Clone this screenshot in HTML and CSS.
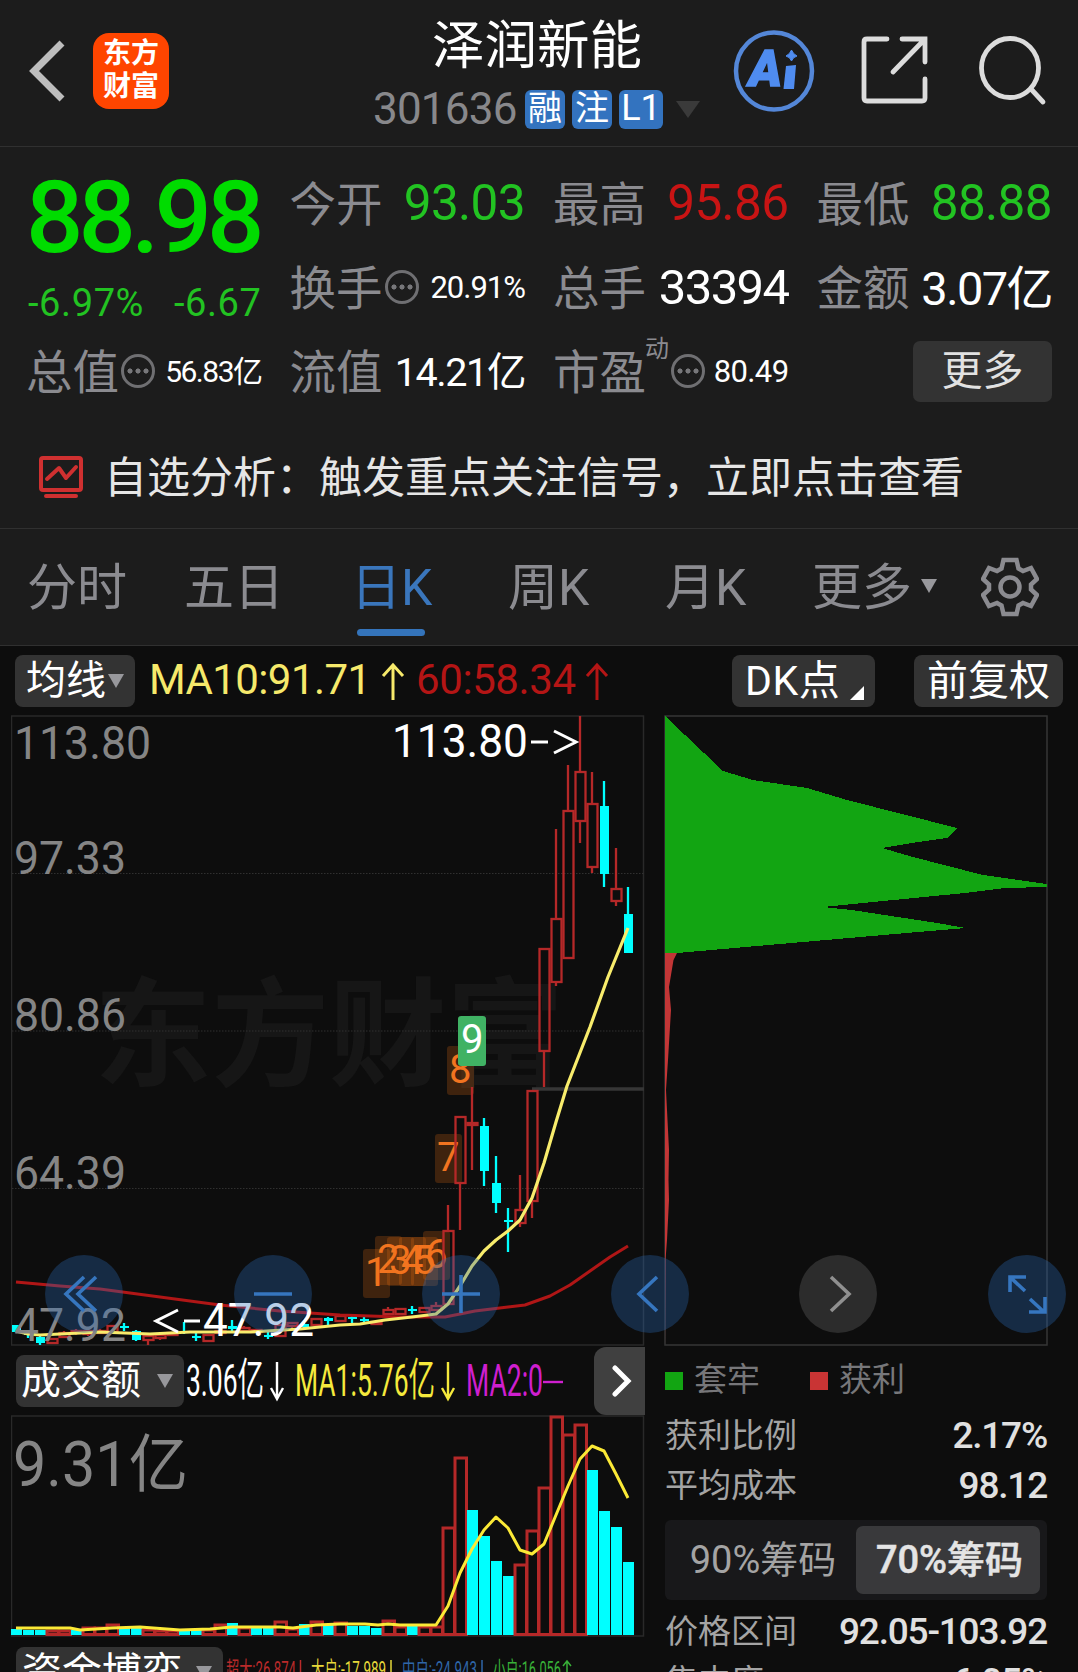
FILE: index.html
```
<!DOCTYPE html>
<html lang="zh-CN">
<head>
  <meta charset="UTF-8">
  <meta name="viewport" content="width=device-width, initial-scale=1.0">
  <title>泽润新能 301636</title>
  <link rel="stylesheet" href="styles.css">
</head>
<body>
  <header class="header">
    <div class="header-left">
      <svg class="back" width="40" height="68" viewBox="0 0 40 68"><path d="M35 6 L7 34 L35 62" /></svg>
      <div class="logo"><span>东方</span><span>财富</span></div>
    </div>
    <div class="header-title">
      <h1>泽润新能</h1>
      <div class="code-row">
        <span class="code">301636</span>
        <span class="badge">融</span>
        <span class="badge">注</span>
        <span class="badge badge-l1">L1</span>
        <i class="tri tri-dark"></i>
      </div>
    </div>
    <div class="header-icons">
      <svg width="82" height="84" viewBox="0 0 82 84">
        <ellipse cx="41" cy="42" rx="38" ry="38.5" fill="none" stroke="#5487d8" stroke-width="4.5" />
        <text x="16" y="57" class="ai-text" textLength="33" lengthAdjust="spacingAndGlyphs">A</text>
        <path d="M53 37 L63 36 L61 60 L50.500 60 Z" fill="#4f8cf0" />
        <path d="M58.500 21 Q60 25 64 27 Q60 28 58.500 32 Q57 28 53 27 Q57 25 58.500 21 Z" fill="#4f8cf0" stroke="#4f8cf0" />
      </svg>
      <svg class="ico-share" width="68" height="70" viewBox="0 0 68 70">
        <path d="M26 4 H6 Q3 4 3 7 V63 Q3 66 6 66 H61 Q64 66 64 63 V44 M41 4 H64 V27 M64 4 L32 37" />
      </svg>
      <svg class="ico-search" width="70" height="72" viewBox="0 0 70 72">
        <ellipse cx="32" cy="33" rx="28.5" ry="29.5" /><path d="M53 54 L65 67" />
      </svg>
    </div>
  </header>

  <section class="quote">
    <div class="price-box">
      <div class="price">88.98</div>
      <div class="change"><span>-6.97%</span><span>-6.67</span></div>
    </div>
    <div class="cell"><label>今开</label><b class="green">93.03</b></div>
    <div class="cell"><label>最高</label><b class="red">95.86</b></div>
    <div class="cell"><label>最低</label><b class="green">88.88</b></div>
    <div class="cell"><label>换手</label><i class="dots"></i><b class="sm pct">20.91%</b></div>
    <div class="cell"><label>总手</label><b class="vol">33394</b></div>
    <div class="cell"><label>金额</label><b class="amount">3.07亿</b></div>
    <div class="cell"><label>总值</label><i class="dots"></i><b class="xs">56.83亿</b></div>
    <div class="cell"><label>流值</label><b class="md">14.21亿</b></div>
    <div class="cell cell-pe"><label>市盈<sup>动</sup></label><i class="dots"></i><b class="sm">80.49</b></div>
    <div class="cell"><button class="btn-more">更多</button></div>
  </section>

  <section class="notice">
    <svg width="46" height="42" viewBox="0 0 46 42">
      <path d="M5 2 H41 Q43 2 43 4 V32 Q43 34 41 34 H5 Q3 34 3 32 V4 Q3 2 5 2 Z M8 40 H38 M9 23 L21 12 L28 22 L38 11" />
    </svg>
    <span>自选分析：触发重点关注信号，立即点击查看</span>
  </section>

  <nav class="tabs">
    <a class="tab-min">分时</a>
    <a class="tab-5d">五日</a>
    <a class="tab-k active">日K</a>
    <a class="tab-k">周K</a>
    <a class="tab-m">月K</a>
    <a>更多<i class="tri tri-tab"></i></a>
    <svg width="58" height="60" viewBox="0 0 58 60">
      <path d="M22.5 3 H35.5 L37.5 11.5 L42 14 L50 11 L56 22 L50 27.5 V32.5 L56 38 L50 49 L42 46 L37.5 48.5 L35.5 57 H22.5 L20.5 48.5 L16 46 L8 49 L2 38 L8 32.5 V27.5 L2 22 L8 11 L16 14 L20.5 11.5 Z" />
      <circle cx="29" cy="30" r="9.5" />
    </svg>
  </nav>

  <div class="toolbar">
    <button class="chip chip-ma">均线<i class="tri tri-chip"></i></button>
    <svg class="ma-text" width="470" height="60" viewBox="145 650 470 60">
      <text x="149" y="694" fill="#f6e96b" textLength="222">MA10:91.71</text>
      <path d="M393 700 V665 M383 676 L393 665 L403 676" stroke="#f6e96b" />
      <text x="416" y="694" fill="#b41515" textLength="160">60:58.34</text>
      <path d="M597 700 V665 M587 676 L597 665 L607 676" stroke="#b41515" />
    </svg>
    <button class="chip chip-dk">DK点<i class="corner"></i></button>
    <button class="chip chip-fq">前复权</button>
  </div>

  <main class="charts">
    <div class="col-left">
      <svg id="kline" width="634" height="631" viewBox="11 715 634 631"></svg>

      <div class="sub-bar">
        <button class="chip chip-vol">成交额<i class="tri tri-chip"></i></button>
        <svg class="vol-text" width="400" height="66" viewBox="185 1348 400 66">
          <text x="186" y="1396" fill="#fff" textLength="78" lengthAdjust="spacingAndGlyphs">3.06亿</text>
          <text x="295" y="1396" fill="#f5e93c" textLength="140" lengthAdjust="spacingAndGlyphs">MA1:5.76亿</text>
          <text x="466" y="1396" fill="#cf1fcf" textLength="77" lengthAdjust="spacingAndGlyphs">MA2:0</text>
          <path d="M277 1362 V1399 M271 1388 L277 1399 L283 1388" stroke="#fff" />
          <path d="M448 1362 V1399 M442 1388 L448 1399 L454 1388" stroke="#f5e93c" />
          <path d="M543 1382 H563" stroke="#cf1fcf" />
        </svg>
        <button class="next">
          <svg width="20" height="34" viewBox="0 0 20 34"><path d="M3 4 L16 17 L3 30" /></svg>
        </button>
      </div>

      <svg id="volume" width="634" height="222" viewBox="11 1415 634 222"></svg>

      <div class="fund-bar">
        <button class="chip chip-fund">资金博弈<i class="tri tri-chip"></i></button>
        <svg class="fund-text" width="350" height="32" viewBox="225 1648 350 32">
          <text x="226" y="1677" fill="#b92a2a" textLength="70" lengthAdjust="spacingAndGlyphs">超大:26.874</text>
          <text x="311" y="1677" fill="#e6d83a" textLength="75" lengthAdjust="spacingAndGlyphs">大户:-17.989</text>
          <text x="402" y="1677" fill="#2f66a8" textLength="75" lengthAdjust="spacingAndGlyphs">中户:-24.943</text>
          <text x="493" y="1677" fill="#38b038" textLength="68" lengthAdjust="spacingAndGlyphs">小户:16.056</text>
          <path d="M300.5 1660 V1678" stroke="#b92a2a" />
          <path d="M391 1660 V1678" stroke="#e6d83a" />
          <path d="M482 1660 V1678" stroke="#2f66a8" />
          <path d="M567 1678 V1661 M563 1666 L567 1661 L571 1666" stroke="#38b038" />
        </svg>
      </div>
    </div>

    <div class="col-right">
      <svg id="chips" width="384" height="631" viewBox="664 715 384 631"></svg>
      <div class="legend">
        <span><i class="sq sq-green"></i>套牢</span>
        <span><i class="sq sq-red"></i>获利</span>
      </div>
      <div class="stat"><span>获利比例</span><b>2.17%</b></div>
      <div class="stat"><span>平均成本</span><b>98.12</b></div>
      <div class="switch">
        <span>90%筹码</span>
        <span class="on">70%筹码</span>
      </div>
      <div class="stat"><span>价格区间</span><b>92.05-103.92</b></div>
      <div class="stat"><span>集中度</span><b>6.05%</b></div>
    </div>

    <div class="float-btns">
      <button><svg viewBox="0 0 78 78"><path d="M39 22 L21 39 L39 56 M51 22 L33 39 L51 56" /></svg></button>
      <button><svg viewBox="0 0 78 78"><path d="M20 39 H58" /></svg></button>
      <button><svg viewBox="0 0 78 78"><path d="M20 39 H58 M39 20 V58" /></svg></button>
      <button><svg viewBox="0 0 78 78"><path d="M46 22 L28 39 L46 56" /></svg></button>
      <button class="off"><svg viewBox="0 0 78 78"><path d="M32 22 L50 39 L32 56" /></svg></button>
      <button><svg viewBox="0 0 78 78"><path d="M37 36 L22 22 M38 22 H22 V37 M42 44 L56 57 M41 57 H57 V42" /></svg></button>
    </div>
  </main>

  <script src="script.js"></script>
</body>
</html>
```
FILE: styles.css
```
* {
  box-sizing: border-box;
  margin: 0;
  padding: 0;
}

body {
  width: 1078px;
  height: 1672px;
  overflow: hidden;
  background: #0d0d0d;
  color: #fff;
  font-family: Roboto, "Noto Sans CJK SC", sans-serif;
  font-weight: 400;
}

button {
  border: none;
  color: inherit;
  font-family: inherit;
}

svg {
  display: block;
  flex: none;
}

i {
  display: inline-block;
  flex: none;
}

/* small triangles */
.tri {
  border-left: 8px solid transparent;
  border-right: 8px solid transparent;
  border-top: 14px solid #98989c;
}

.tri-dark {
  border-left-width: 12px;
  border-right-width: 12px;
  border-top: 17px solid #3a3a3a;
  margin-left: 6px;
}

/* header */
.header {
  height: 147px;
  display: flex;
  background: #1c1c1c;
  border-bottom: 1px solid #303030;
}

.header-left {
  width: 340px;
  padding: 33px 0 0 27px;
  display: flex;
  gap: 26px;
}

.back {
  margin-top: 4px;
}

.back path {
  fill: none;
  stroke: #bdbdbd;
  stroke-width: 7;
}

.logo {
  width: 76px;
  height: 76px;
  padding-top: 4px;
  border-radius: 16px;
  background: #ff4500;
  display: flex;
  flex-direction: column;
  align-items: center;
}

.logo span {
  font-size: 28px;
  line-height: 33px;
  font-weight: 700;
}

.header-title {
  width: 393px;
  padding-top: 15px;
}

.header-title h1 {
  padding-left: 92px;
  font-size: 52.5px;
  font-weight: 400;
  line-height: 62px;
}

.code-row {
  margin-top: 9px;
  padding-left: 33px;
  height: 46px;
  display: flex;
  align-items: center;
  gap: 7px;
}

.code {
  width: 145px;
  font-size: 44px;
  letter-spacing: -0.8px;
  color: #88888b;
}

.badge {
  flex: none;
  width: 40px;
  height: 39px;
  border-radius: 6px;
  background: #3373bf;
  font-size: 34px;
  line-height: 37px;
  text-align: center;
}

.badge-l1 {
  width: 44px;
  font-size: 36px;
}

.header-icons {
  width: 345px;
  padding-top: 29px;
  display: flex;
}

.ai-text {
  font-size: 49px;
  font-weight: 900;
  font-style: italic;
  fill: #4f8cf0;
  stroke: #4f8cf0;
  stroke-width: 1.5;
}

.ico-share {
  margin: 6px 0 0 46px;
}

.ico-search {
  margin: 6px 0 0 49px;
}

.ico-share path,
.ico-search path,
.ico-search ellipse {
  fill: none;
  stroke: #dcdcdc;
  stroke-width: 4.8;
  stroke-linecap: round;
}

/* quote */
.quote {
  padding: 14px 26px 0;
  background: #1c1c1c;
  display: grid;
  grid-template-columns: repeat(4, 1fr);
  grid-auto-rows: 84px;
  column-gap: 28px;
}

.price-box {
  grid-row: span 2;
}

.price {
  padding-top: 5px;
  font-size: 101px;
  font-weight: 500;
  line-height: 104px;
  letter-spacing: -4.8px;
  color: #00dc00;
}

.change {
  margin-top: 10px;
  padding: 0 0 0 2px;
  display: flex;
  justify-content: space-between;
  font-size: 38px;
  line-height: 46px;
  letter-spacing: 0.6px;
  color: #22c322;
}

.cell {
  display: flex;
  align-items: center;
  white-space: nowrap;
}

.cell label {
  position: relative;
  padding-bottom: 6px;
  font-size: 46.500px;
  color: #8b8b90;
}

.cell b {
  margin-left: auto;
  font-size: 49.500px;
  font-weight: 400;
  letter-spacing: -0.6px;
}

.cell .green {
  color: #22c322;
}

.cell .red {
  color: #c81414;
}

.cell .sm {
  font-size: 31px;
}

.cell .pct {
  letter-spacing: -1px;
}

.cell .xs {
  padding-bottom: 4px;
  font-size: 30px;
  letter-spacing: -1.5px;
}

.cell .md {
  padding-bottom: 5px;
  font-size: 39.500px;
  letter-spacing: -1.4px;
}

.cell .vol {
  font-size: 49px;
  letter-spacing: -1.6px;
}

.cell .amount {
  padding-bottom: 6px;
  font-size: 47px;
  letter-spacing: -1.6px;
}

.cell sup {
  position: absolute;
  left: 92px;
  top: -6px;
  font-size: 24px;
}

.dots {
  width: 34px;
  height: 34px;
  margin-left: 2px;
  border: 3px solid #6f6f72;
  border-radius: 50%;
  background:
    radial-gradient(circle at 6px 14px, #77777a 2.3px, transparent 2.8px),
    radial-gradient(circle at 14px 14px, #77777a 2.3px, transparent 2.8px),
    radial-gradient(circle at 22px 14px, #77777a 2.3px, transparent 2.8px);
}

.cell-pe .dots {
  margin-left: 25px;
}

.btn-more {
  width: 139px;
  height: 61px;
  margin-left: auto;
  border-radius: 7px;
  background: #333;
  color: #e2e2e2;
  font-size: 41px;
  line-height: 58px;
}

/* notice */
.notice {
  height: 116px;
  padding: 12px 0 0 38px;
  display: flex;
  align-items: center;
  gap: 20px;
  background: #1c1c1c;
  border-bottom: 1px solid #303030;
  color: #e6e6e6;
  font-size: 43px;
}

.notice span {
  padding-bottom: 6px;
}

.notice svg path {
  fill: none;
  stroke: #cf3030;
  stroke-width: 4;
  stroke-linecap: round;
  stroke-linejoin: round;
}

/* tabs */
.tabs {
  height: 117px;
  padding: 2px 39px 0 27px;
  display: flex;
  align-items: center;
  background: #1c1c1c;
  border-bottom: 1px solid #303030;
}

.tabs a {
  position: relative;
  font-size: 50px;
  line-height: 70px;
  color: #8b8b90;
}

.tabs .tab-min {
  width: 157px;
}

.tabs .tab-5d {
  width: 167px;
}

.tabs .tab-k {
  width: 157px;
}

.tabs .tab-m {
  width: 147px;
}

.tabs .active {
  color: #3a76bc;
}

.tabs .active::after {
  content: "";
  position: absolute;
  left: 6px;
  bottom: -13px;
  width: 68px;
  height: 7px;
  border-radius: 4px;
  background: #3474bb;
}

.tri-tab {
  margin-left: 9px;
  vertical-align: 12px;
}

.tabs svg {
  margin: -3px 0 0 auto;
}

.tabs svg path,
.tabs svg circle {
  fill: none;
  stroke: #8b8b90;
  stroke-width: 4.5;
}

/* chart toolbar */
.toolbar {
  height: 69px;
  padding: 9px 15px 0;
  display: flex;
}

.chip {
  height: 52px;
  border-radius: 8px;
  background: #333;
  display: flex;
  align-items: center;
  font-size: 40px;
  line-height: 50px;
  white-space: nowrap;
}

.chip-ma {
  width: 120px;
  padding-left: 11px;
  gap: 2px;
}

.ma-text {
  margin: -5px 0 0 10px;
}

.ma-text text {
  font-size: 42px;
}

.ma-text path {
  fill: none;
  stroke-width: 3;
}

.vol-text path {
  fill: none;
  stroke-width: 2.4;
}

.chip-dk {
  width: 143px;
  margin-left: 117px;
  padding-left: 13px;
  font-size: 41px;
  letter-spacing: 0.5px;
  gap: 10px;
}

.corner {
  margin-top: 24px;
  border-left: 14px solid transparent;
  border-bottom: 14px solid #fff;
}

.chip-fq {
  width: 149px;
  margin-left: 39px;
  justify-content: center;
  font-size: 41px;
}

/* charts */
.charts {
  position: relative;
  display: flex;
  gap: 19px;
  padding-left: 11px;
}

.col-left {
  width: 634px;
}

.col-right {
  width: 384px;
}

.grid-label {
  font-size: 46px;
  fill: #858585;
}

.mark-label {
  font-size: 46px;
  fill: #fff;
}

.watermark {
  font-size: 118px;
  font-weight: 700;
  fill: #161616;
}

.tag-num {
  font-size: 40px;
}

.sub-bar {
  height: 69px;
  padding: 0 0 0 5px;
  display: flex;
  align-items: center;
}

.chip-vol {
  width: 168px;
  padding-left: 5px;
  gap: 16px;
}

.vol-text {
  margin-left: 1px;
}

.vol-text text {
  font-size: 45px;
}

.next {
  width: 51px;
  height: 68px;
  margin-left: auto;
  padding-left: 5px;
  border-radius: 12px 0 0 12px;
  background: #404040;
  display: flex;
  align-items: center;
  justify-content: center;
}

.next path {
  fill: none;
  stroke: #fff;
  stroke-width: 5;
  stroke-linecap: round;
}

.volume-label {
  font-size: 63px;
  fill: #858585;
}

.fund-bar {
  height: 35px;
  padding: 10px 0 0 5px;
  display: flex;
  align-items: flex-start;
}

.chip-fund {
  width: 207px;
  padding-left: 6px;
  gap: 14px;
}

.fund-text {
  margin: 1px 0 0 2px;
}

.fund-text text {
  font-size: 22px;
}

.fund-text path {
  fill: none;
  stroke-width: 1.5;
}

/* chip distribution */
.legend {
  height: 65px;
  padding: 5px 0 0 1px;
  display: flex;
  align-items: center;
  gap: 50px;
  font-size: 33px;
  line-height: 48px;
  color: #77777a;
}

.legend span {
  display: flex;
  align-items: center;
  gap: 11px;
  margin-top: -3px;
}

.sq {
  width: 18px;
  height: 18px;
  margin-top: 3px;
}

.sq-green {
  background: #12a512;
}

.sq-red {
  background: #c93434;
}

.stat {
  height: 50px;
  padding: 0 1px;
  display: flex;
  align-items: center;
  justify-content: space-between;
  font-size: 33px;
  line-height: 50px;
  color: #a4a4a4;
}

.stat b {
  font-size: 37px;
  font-weight: 500;
  letter-spacing: -1.2px;
  color: #e0e0e0;
}

.switch {
  height: 80px;
  margin: 9px 1px 7px;
  padding: 6px 7px;
  border-radius: 6px;
  background: #18181a;
  display: flex;
}

.switch span {
  width: 184px;
  padding-right: 2px;
  text-align: center;
  font-size: 38px;
  line-height: 68px;
  border-radius: 7px;
  color: #a4a4a4;
}

.switch .on {
  padding: 0 0 0 3px;
  background: #39393b;
  color: #e4e4e4;
  font-weight: 500;
  -webkit-text-stroke: 0.5px #e4e4e4;
}

/* floating buttons over the charts */
.float-btns {
  position: absolute;
  top: 540px;
  left: 45px;
  display: flex;
  gap: 110.5px;
}

.float-btns button {
  width: 78px;
  height: 78px;
  border-radius: 50%;
  background: rgba(44, 106, 182, 0.33);
}

.float-btns path {
  fill: none;
  stroke: #3676bf;
  stroke-width: 3.6;
}

.float-btns .off {
  background: #2c2c2c;
}

.float-btns .off path {
  stroke: #909090;
}
```
FILE: script.js
```
const RED = '#b52828';
const CYAN = '#00ffff';
const STEP = 12;
const FIRST_X = 16;

// [up, high, top, bottom, low] in chart pixels, one entry per day
const candles = [
  [0, 1325, 1325, 1332, 1332], [0, 1330, 1333, 1335, 1338], [0, 1334, 1337, 1343, 1345],
  [1, 1338, 1339, 1343, 1344], [1, 1331, 1333, 1337, 1338], [1, 1329, 1331, 1333, 1335],
  [1, 1328, 1331, 1334, 1336], [1, 1329, 1331, 1333, 1334], [1, 1325, 1326, 1332, 1332],
  [0, 1323, 1326, 1328, 1331], [0, 1330, 1331, 1340, 1341], [1, 1334, 1336, 1340, 1345],
  [1, 1333, 1335, 1338, 1340], [1, 1332, 1333, 1335, 1336], [0, 1322, 1331, 1333, 1334],
  [0, 1333, 1336, 1338, 1341], [1, 1334, 1335, 1341, 1341], [1, 1330, 1331, 1333, 1334],
  [0, 1320, 1326, 1329, 1332], [1, 1326, 1328, 1331, 1332], [1, 1329, 1330, 1332, 1333],
  [0, 1332, 1335, 1337, 1339], [1, 1324, 1325, 1336, 1336], [1, 1322, 1323, 1326, 1328],
  [0, 1322, 1324, 1327, 1330], [1, 1318, 1319, 1325, 1325], [0, 1317, 1318, 1321, 1325],
  [1, 1315, 1316, 1321, 1321], [0, 1316, 1317, 1319, 1324], [0, 1316, 1319, 1321, 1323],
  [1, 1321, 1322, 1324, 1325], [1, 1307, 1310, 1314, 1315], [1, 1308, 1309, 1314, 1315],
  [0, 1306, 1309, 1311, 1314], [1, 1307, 1308, 1312, 1313], [1, 1302, 1306, 1310, 1310],
  [1, 1205, 1231, 1304, 1304], [1, 1117, 1117, 1183, 1230], [1, 1087, 1123, 1125, 1170],
  [0, 1118, 1126, 1171, 1186], [0, 1156, 1183, 1203, 1213], [0, 1208, 1220, 1222, 1252],
  [1, 1175, 1210, 1223, 1227], [1, 1091, 1091, 1201, 1218], [1, 949, 949, 1051, 1087],
  [1, 829, 919, 982, 986], [1, 765, 811, 958, 958], [1, 716, 772, 821, 843],
  [1, 772, 804, 867, 873], [0, 781, 806, 874, 887], [1, 848, 889, 901, 906],
  [0, 887, 914, 953, 953]
];

// [up, top of bar]
const volumes = [
  [0, 1629], [0, 1630], [0, 1630], [1, 1631], [1, 1631], [0, 1630], [1, 1628], [1, 1628],
  [1, 1625], [0, 1628], [0, 1628], [1, 1630], [1, 1631], [1, 1631], [0, 1631], [0, 1630],
  [1, 1630], [1, 1625], [0, 1623], [1, 1628], [0, 1628], [0, 1628], [1, 1622], [1, 1629],
  [0, 1624], [1, 1622], [0, 1624], [1, 1623], [0, 1626], [0, 1626], [0, 1628], [1, 1621],
  [1, 1627], [0, 1626], [1, 1627], [1, 1627], [1, 1528], [1, 1458], [0, 1510], [0, 1536],
  [0, 1561], [0, 1576], [1, 1565], [1, 1531], [1, 1488], [1, 1417], [1, 1435], [1, 1425],
  [0, 1470], [0, 1511], [0, 1527], [0, 1562]
];

const ma10 = '16,1331 28,1334 40,1335 60,1334 100,1332 150,1334 190,1332 250,1332 300,1329 340,1325 360,1324 385,1320 412,1317 436,1314 448,1304 460,1286 472,1266 484,1251 496,1240 508,1231 520,1220 532,1198 544,1163 556,1122 567,1086 590,1027 608,977 628,928';
const ma60 = '16,1282 60,1286 100,1289 130,1293 160,1297 220,1305 280,1311 340,1315 400,1317 445,1317 475,1311 508,1307 525,1305 550,1296 570,1285 590,1271 610,1257 628,1246';
const volMa = '16,1628 70,1628 80,1630 112,1628 140,1627 180,1630 210,1629 232,1627 280,1627 293,1628 316,1625 340,1624 365,1624 378,1625 388,1624 400,1625 436,1625 448,1606 460,1573 472,1549 484,1530 496,1517 508,1528 520,1550 532,1554 544,1544 556,1515 568,1486 580,1459 592,1446 604,1451 616,1474 628,1498';

function rect(x, y, w, h, attrs) {
  return `<rect x="${x}" y="${y}" width="${w}" height="${h}" ${attrs} />`;
}

function label(cls, x, y, width, text) {
  return `<text class="${cls}" x="${x}" y="${y}" textLength="${width}" lengthAdjust="spacingAndGlyphs">${text}</text>`;
}

function line(points, color, width) {
  return `<polyline points="${points}" fill="none" stroke="${color}" stroke-width="${width}" stroke-linejoin="round" />`;
}

function drawKline() {
  let out = label('watermark', 94, 1077, 470, '东方财富');
  out += rect(11.5, 716, 632, 629, 'fill="none" stroke="#292929" stroke-width="1.5"');
  [873.5, 1031, 1188.5].forEach(y => {
    out += `<path d="M12 ${y} H644" stroke="#303030" stroke-dasharray="1.5 1.5" />`;
  });
  out += '<path d="M532 1089 H644" stroke="#363636" stroke-width="3.5" />';

  // signal tags 1-8, drawn under the candles
  const tags = [[363, 1249], [375, 1236], [387, 1237], [399, 1237], [411, 1237], [423, 1231], [435, 1134], [447, 1046]];
  tags.forEach(([x, y], i) => {
    out += rect(x, y, 27, 49, 'rx="3" fill="#f07010" fill-opacity="0.22"');
    out += `<text class="tag-num" x="${x + 2}" y="${y + 37}" fill="#f27420">${i + 1}</text>`;
  });

  candles.forEach(([up, high, top, bottom, low], i) => {
    const x = FIRST_X + i * STEP;
    const color = up ? RED : CYAN;
    if (high < top) out += `<path d="M${x} ${high} V${top}" stroke="${color}" stroke-width="2.3" />`;
    if (low > bottom) out += `<path d="M${x} ${bottom} V${low}" stroke="${color}" stroke-width="2.3" />`;
    out += up
      ? rect(x - 4.5, top, 10, bottom - top, `fill="none" stroke="${color}" stroke-width="2.3"`)
      : rect(x - 4, top, 9, bottom - top, `fill="${color}"`);
  });

  out += line(ma60, '#b01616', 3);
  out += line(ma10, '#f8ec6c', 3.2);
  out += rect(458, 1016, 28, 50, 'rx="3" fill="#40b264"');
  out += '<text class="tag-num" x="461" y="1053" fill="#fff">9</text>';

  out += label('grid-label', 14, 758.5, 137, '113.80');
  out += label('grid-label', 14, 874, 112, '97.33');
  out += label('grid-label', 14, 1031, 112, '80.86');
  out += label('grid-label', 14, 1189, 112, '64.39');
  out += label('grid-label', 14, 1341, 112, '47.92');
  out += label('mark-label', 392, 756.5, 136, '113.80');
  out += '<path d="M531 742 H548 M554 731 L576 742 L554 753 M200 1321 H184 M178 1310 L156 1321 L178 1332" fill="none" stroke="#fff" stroke-width="3" />';
  out += label('mark-label', 203, 1335.5, 111, '47.92');
  document.getElementById('kline').innerHTML = out;
}

function drawVolume() {
  let out = rect(11.5, 1416, 632, 220, 'fill="none" stroke="#292929" stroke-width="1.5"');
  volumes.forEach(([up, top], i) => {
    const x = FIRST_X + i * STEP;
    out += up
      ? rect(x - 5, top, 11.5, 1634.5 - top, `fill="none" stroke="${RED}" stroke-width="3"`)
      : rect(x - 5, top, 11, 1635 - top, `fill="${CYAN}"`);
  });
  out += line(volMa, '#fbe936', 3);
  out += label('volume-label', 13, 1486, 175, '9.31亿');
  document.getElementById('volume').innerHTML = out;
}

function drawChips() {
  const trapped = '665,716 723,771 753,780 807,788 847,800 957,828 947,838 918,842 882,848 913,857 983,875 1047,884 1047,887 1005,888 965,893 863,903 823,907 852,910 937,923 966,928 918,932 677,953 665,953';
  const profit = '665,953 677,953 673.5,960 669,987 671,1010 668,1060 666,1090 669,1150 668.5,1180 669,1200 667,1240 665.5,1260 665,1345';
  let out = rect(665, 716, 382, 629, 'fill="none" stroke="#363636" stroke-width="1.5"');
  out += `<polygon points="${trapped}" fill="#12a512" shape-rendering="crispEdges" />`;
  out += `<polygon points="${profit}" fill="#c23636" />`;
  document.getElementById('chips').innerHTML = out;
}

drawKline();
drawVolume();
drawChips();
```
